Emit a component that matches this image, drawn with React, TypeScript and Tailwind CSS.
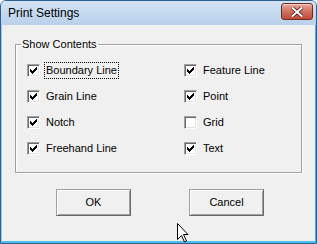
const Check = () => (
  <svg width="7" height="7" viewBox="0 0 7 7" className="block">
    <rect x="0" y="2" width="1" height="3" fill="#000" />
    <rect x="1" y="3" width="1" height="3" fill="#000" />
    <rect x="2" y="4" width="1" height="3" fill="#000" />
    <rect x="3" y="3" width="1" height="3" fill="#000" />
    <rect x="4" y="2" width="1" height="3" fill="#000" />
    <rect x="5" y="1" width="1" height="3" fill="#000" />
    <rect x="6" y="0" width="1" height="3" fill="#000" />
  </svg>
);

type Item = { label: string; checked: boolean; focused?: boolean };

const CheckRow = ({ label, checked, focused }: Item) => (
  <label className="flex items-center h-[17px]">
    <span className="w-[13px] h-[13px] flex items-center justify-center bg-white border border-t-[#a0a0a0] border-l-[#a0a0a0] border-b-white border-r-white shadow-[inset_1px_1px_0_#696969,inset_-1px_-1px_0_#e3e3e3]">
      {checked && <Check />}
    </span>
    <span
      className={
        focused
          ? "ml-[4px] h-[17px] px-[1px] flex items-center border border-dotted border-black"
          : "ml-[4px] h-[17px] px-[2px] flex items-center"
      }
    >
      {label}
    </span>
  </label>
);

const Button = ({ children }: { children: string }) => (
  <button className="w-[75px] h-[27px] bg-[#f0f0f0] text-[11px] text-black border border-t-[#a0a0a0] border-l-[#a0a0a0] border-r-[#696969] border-b-[#696969] shadow-[inset_1px_1px_0_#fff,inset_-1px_-1px_0_#a0a0a0]">
    {children}
  </button>
);

export default function App() {
  const left: Item[] = [
    { label: "Boundary Line", checked: true, focused: true },
    { label: "Grain Line", checked: true },
    { label: "Notch", checked: true },
    { label: "Freehand Line", checked: true },
  ];
  const right: Item[] = [
    { label: "Feature Line", checked: true },
    { label: "Point", checked: true },
    { label: "Grid", checked: false },
    { label: "Text", checked: true },
  ];

  return (
    <div className="relative w-[317px] h-[244px] flex flex-col overflow-hidden border border-[#2f5f8c] rounded-t-[6px] bg-[#f0f0f0] text-black font-['Liberation_Sans',Arial,sans-serif]">
      {/* title bar */}
      <div className="h-[24px] flex items-center justify-between pl-[7px] pr-[3px] bg-gradient-to-b from-[#d3e3f4] to-[#b8d0ea]">
        <span className="text-[12px] leading-none">Print Settings</span>
        <div className="w-[32px] h-[17px] mb-[3px] flex items-center justify-center rounded-[3px] border border-[#6b2a22] bg-gradient-to-b from-[#e9a99b] via-[#d0705f] to-[#c04a3a] shadow-[inset_0_1px_0_#f5cfc6]">
          <svg width="12" height="10" viewBox="0 0 12 10">
            <path d="M1.5 1 L10.5 9 M10.5 1 L1.5 9" stroke="#4a1a14" strokeWidth="3.6" strokeLinecap="square" />
            <path d="M1.5 1 L10.5 9 M10.5 1 L1.5 9" stroke="#fff" strokeWidth="2" strokeLinecap="square" />
          </svg>
        </div>
      </div>

      {/* client area */}
      <div className="flex-1 flex flex-col border-l border-r border-b-2 border-l-[#9fc4e6] border-r-[#4ea3e0] border-b-[#4cc0ea] text-[11px]">
        <fieldset className="mt-[13px] mx-[13px] h-[135px] border border-[#a0a0a0] shadow-[inset_1px_1px_0_#fff,1px_1px_0_#fff]">
          <legend className="ml-[5px] px-[1px] leading-[13px]">Show Contents</legend>
          <div className="grid grid-cols-[157px_1fr] pl-[11px] pt-[11px]">
            <div className="flex flex-col gap-[9px]">
              {left.map((it) => (
                <CheckRow key={it.label} {...it} />
              ))}
            </div>
            <div className="flex flex-col gap-[9px]">
              {right.map((it) => (
                <CheckRow key={it.label} {...it} />
              ))}
            </div>
          </div>
        </fieldset>

        <div className="flex gap-[58px] mt-[16px] ml-[54px]">
          <Button>OK</Button>
          <Button>Cancel</Button>
        </div>
      </div>

      {/* mouse pointer */}
      <svg className="absolute left-[175px] top-[221px]" width="13" height="21" viewBox="0 0 13 21">
        <path d="M1.5 1.5 L1.5 17.5 L5.5 13.5 L8.5 20 L10.5 19 L7.5 12.5 L12 12.5 Z" fill="#fff" stroke="#000" strokeWidth="1" strokeLinejoin="miter" />
      </svg>
    </div>
  );
}
